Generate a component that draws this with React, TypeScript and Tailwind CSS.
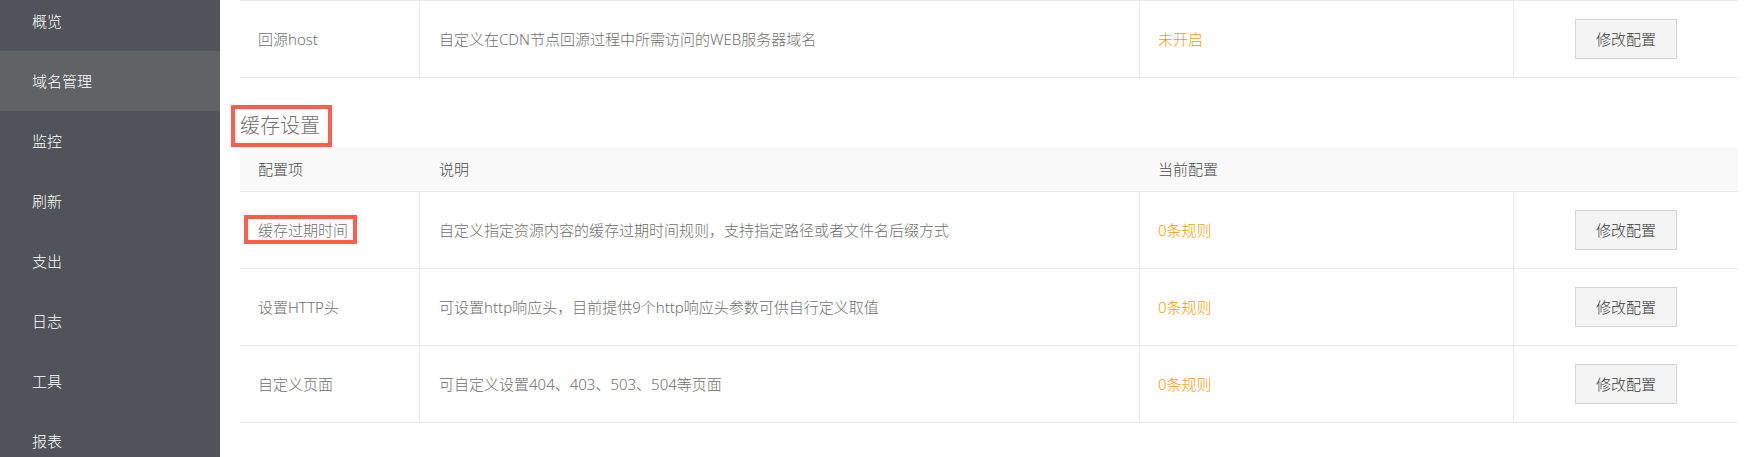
import React from "react";

const navItems = ["概览", "域名管理", "监控", "刷新", "支出", "日志", "工具", "报表"];

type Row = {
  name: string;
  desc: string;
  value: string;
  marked?: boolean;
};

const cacheRows: Row[] = [
  {
    name: "缓存过期时间",
    desc: "自定义指定资源内容的缓存过期时间规则，支持指定路径或者文件名后缀方式",
    value: "0条规则",
    marked: true,
  },
  {
    name: "设置HTTP头",
    desc: "可设置http响应头，目前提供9个http响应头参数可供自行定义取值",
    value: "0条规则",
  },
  {
    name: "自定义页面",
    desc: "可自定义设置404、403、503、504等页面",
    value: "0条规则",
  },
];

const font = { fontFamily: '"Noto Sans", "Noto Sans CJK SC", sans-serif' };

function EditButton() {
  return (
    <button
      type="button"
      className="h-[40px] w-[102px] border border-[#d3d3d3] bg-[#f4f4f4] text-[15px] font-light text-[#3a3a3a]"
    >
      修改配置
    </button>
  );
}

function ConfigRow({ row }: { row: Row }) {
  return (
    <div className="grid h-[77px] grid-cols-[180px_720px_374px_1fr] border-b border-[#e8e8e8] text-[15px] font-light">
      <div className="flex items-center border-r border-[#e8e8e8] pl-[18px] text-[#707070]">
        {row.marked ? (
          <span className="relative leading-[15px]">
            {row.name}
            <span className="absolute -top-[8px] -bottom-[6px] -left-[14px] -right-[9px] border-4 border-[#fd5e4f]" />
          </span>
        ) : (
          row.name
        )}
      </div>
      <div className="flex items-center border-r border-[#e8e8e8] pl-[19px] text-[#707070]">
        {row.desc}
      </div>
      <div className="flex items-center border-r border-[#e8e8e8] pl-[18px] text-[#ff9a00]">
        {row.value}
      </div>
      <div className="flex items-center justify-center">
        <EditButton />
      </div>
    </div>
  );
}

export default function App() {
  return (
    <div className="flex h-[457px] w-[1746px] overflow-hidden bg-white" style={font}>
      <aside className="w-[220px] shrink-0 bg-[#505359]">
        <div className="-mt-[9px]">
          {navItems.map((item) => (
            <div
              key={item}
              className={`flex h-[60px] items-center pl-[32px] text-[15px] font-light text-white ${
                item === "域名管理" ? "bg-[#606266]" : ""
              }`}
            >
              {item}
            </div>
          ))}
        </div>
      </aside>

      <main className="flex-1 pl-[20px] pr-[8px]">
        <div className="border-t border-[#e8e8e8]">
          <ConfigRow
            row={{
              name: "回源host",
              desc: "自定义在CDN节点回源过程中所需访问的WEB服务器域名",
              value: "未开启",
            }}
          />
        </div>

        <div className="mt-[27px] -ml-[9px]">
          <div className="inline-flex h-[42px] items-center border-4 border-[#fd5e4f] pl-[5px] pr-[8px] text-[20px] font-light text-[#707070]">
            缓存设置
          </div>
        </div>

        <div className="grid h-[45px] grid-cols-[180px_720px_374px_1fr] border-b border-[#e8e8e8] bg-[#f9f9f9] text-[15px] font-light text-[#4a4a4a]">
          <div className="flex items-center pl-[18px]">配置项</div>
          <div className="flex items-center pl-[19px]">说明</div>
          <div className="flex items-center pl-[18px]">当前配置</div>
          <div />
        </div>

        {cacheRows.map((row) => (
          <ConfigRow key={row.name} row={row} />
        ))}
      </main>
    </div>
  );
}
